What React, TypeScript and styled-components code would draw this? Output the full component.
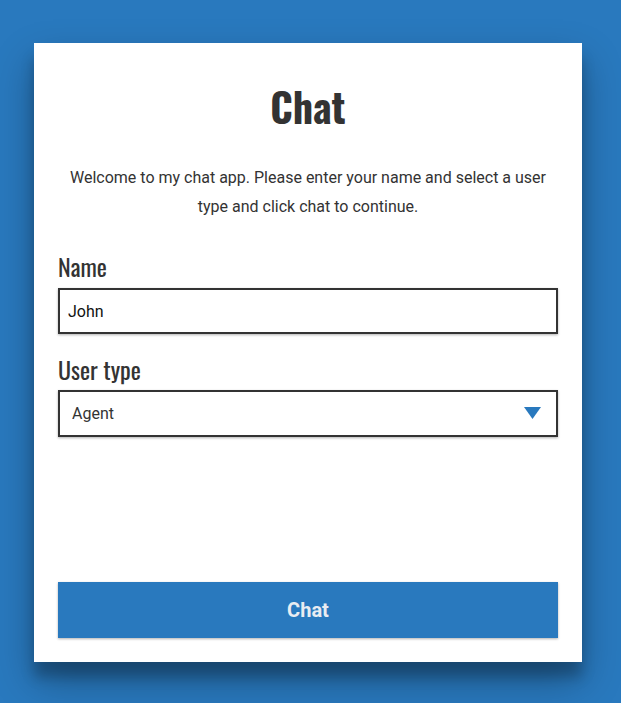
import React from "react";
import styled, { createGlobalStyle } from "styled-components";

const Global = createGlobalStyle`
  html, body { margin: 0; padding: 0; }
  body {
    background: #2979be;
    font-family: Roboto, "Liberation Sans", sans-serif;
    min-height: 703px;
  }
  * { box-sizing: border-box; }
`;

const Page = styled.div`
  padding: 43px 0 0 34px;
`;

const Card = styled.form`
  width: 548px;
  height: 619px;
  background: #fff;
  padding: 36px 24px 24px;
  display: flex;
  flex-direction: column;
  box-shadow: 0 19px 38px rgba(0, 0, 0, 0.3), 0 15px 12px rgba(0, 0, 0, 0.22);
`;

const Title = styled.h1`
  margin: 0;
  text-align: center;
  font-family: Oswald, "Liberation Sans Narrow", "DejaVu Sans Condensed", sans-serif;
  font-weight: 700;
  font-size: 40px;
  line-height: 54px;
  color: #333;
`;

const Intro = styled.p`
  margin: 30px 0 0;
  text-align: center;
  font-size: 16px;
  line-height: 29px;
  color: #333;
`;

const Field = styled.div<{ $top: number }>`
  margin-top: ${(p) => p.$top}px;
  display: flex;
  flex-direction: column;
`;

const Label = styled.label<{ $gap: number }>`
  font-family: Oswald, "Liberation Sans Narrow", "DejaVu Sans Condensed", sans-serif;
  font-size: 24px;
  line-height: 30px;
  color: #333;
  margin-bottom: ${(p) => p.$gap}px;
`;

const TextInput = styled.input`
  height: 46px;
  width: 100%;
  border: 2px solid #333;
  padding: 0 8px;
  font-family: Roboto, "Liberation Sans", sans-serif;
  font-size: 16px;
  color: #111;
  outline: none;
  box-shadow: 0 1px 3px rgba(0, 0, 0, 0.12), 0 1px 2px rgba(0, 0, 0, 0.2);
`;

const SelectWrap = styled.div`
  position: relative;
`;

const Select = styled.select`
  appearance: none;
  -webkit-appearance: none;
  height: 47px;
  width: 100%;
  border: 2px solid #333;
  border-radius: 0;
  background: #fff;
  padding: 0 12px;
  font-family: Roboto, "Liberation Sans", sans-serif;
  font-size: 16px;
  color: #333;
  outline: none;
  box-shadow: 0 1px 3px rgba(0, 0, 0, 0.12), 0 1px 2px rgba(0, 0, 0, 0.2);
`;

const Arrow = styled.svg`
  position: absolute;
  right: 17px;
  top: 17px;
  width: 17px;
  height: 12px;
  pointer-events: none;
`;

const Button = styled.button`
  margin-top: auto;
  height: 56px;
  width: 100%;
  border: none;
  background: #2979be;
  color: #e8ecf2;
  font-family: Roboto, "Liberation Sans", sans-serif;
  font-weight: 700;
  font-size: 20px;
  box-shadow: 0 1px 3px rgba(0, 0, 0, 0.12), 0 1px 2px rgba(0, 0, 0, 0.2);
  cursor: pointer;
`;

export default function App() {
  return (
    <Page>
      <Global />
      <Card onSubmit={(e) => e.preventDefault()}>
        <Title>Chat</Title>
        <Intro>
          Welcome to my chat app. Please enter your name and select a user
          type and click chat to continue.
        </Intro>
        <Field $top={30}>
          <Label htmlFor="name" $gap={7}>Name</Label>
          <TextInput id="name" defaultValue="John" />
        </Field>
        <Field $top={20}>
          <Label htmlFor="type" $gap={6}>User type</Label>
          <SelectWrap>
            <Select id="type" defaultValue="agent">
              <option value="agent">Agent</option>
              <option value="customer">Customer</option>
            </Select>
            <Arrow viewBox="0 0 17 12">
              <polygon points="0,0 17,0 8.5,12" fill="#2979be" />
            </Arrow>
          </SelectWrap>
        </Field>
        <Button type="submit">Chat</Button>
      </Card>
    </Page>
  );
}
